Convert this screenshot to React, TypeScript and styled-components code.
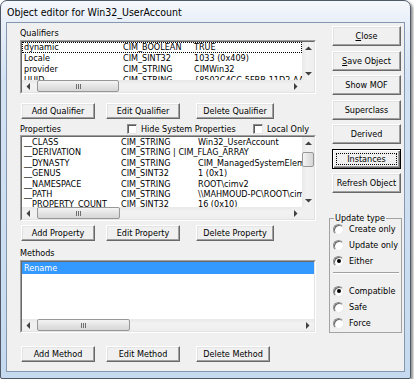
import React from "react";
import styled, { createGlobalStyle, css } from "styled-components";

const FONT = `"DejaVu Sans Condensed", "Liberation Sans", Arial, sans-serif`;
const FS = "9px";

const Global = createGlobalStyle`
  html, body { margin: 0; padding: 0; background: #ffffff; }
  body { font-family: ${FONT}; color: #000; }
  * { box-sizing: border-box; }
`;

const Window = styled.div`
  width: 411px;
  height: 379px;
  border: 1px solid #4f5968;
  border-radius: 7px 7px 2px 2px;
  background: linear-gradient(to bottom, #f5f8fc 0px, #e8eff8 21px, #d3e2f3 80px, #c6daef 100%);
  box-shadow: 2px 2px 3px rgba(0, 0, 0, 0.45);
  display: flex;
  flex-direction: column;
`;

const TitleBar = styled.div`
  height: 21px;
  padding-left: 6px;
  font-size: 10.5px;
  line-height: 22px;
  white-space: nowrap;
`;

const Client = styled.div`
  margin: 0 5px;
  height: 350px;
  border: 1px solid #8397b0;
  background: #f0f0f0;
  display: flex;
  font-size: ${FS};
`;

const LeftCol = styled.div`
  margin-left: 13px;
  width: 296px;
  display: flex;
  flex-direction: column;
`;

const RightCol = styled.div`
  margin-left: 13px;
  width: 74px;
  display: flex;
  flex-direction: column;
`;

const Label = styled.div<{ $mt: number }>`
  margin-top: ${(p) => p.$mt}px;
  height: 13px;
  line-height: 13px;
  white-space: nowrap;
`;

const ListFrame = styled.div<{ $h: number }>`
  height: ${(p) => p.$h}px;
  border: 1px solid;
  border-color: #a0a0a0 #ffffff #ffffff #a0a0a0;
`;

const ListInner = styled.div<{ $v: boolean }>`
  height: 100%;
  border: 1px solid;
  border-color: #696969 #e3e3e3 #e3e3e3 #696969;
  display: grid;
  grid-template-columns: ${(p) => (p.$v ? "1fr 12px" : "1fr")};
  grid-template-rows: 1fr 12px;
  background: #fff;
`;

const ListContent = styled.div`
  overflow: hidden;
  background: #fff;
  min-width: 0;
`;

const Row = styled.div<{ $h: number; $sel?: boolean; $focus?: boolean }>`
  display: flex;
  height: ${(p) => p.$h}px;
  line-height: ${(p) => p.$h}px;
  white-space: nowrap;
  padding-left: 2px;
  ${(p) =>
    p.$sel &&
    css`
      background: #3399ff;
      color: #fff;
    `}
  ${(p) =>
    p.$focus &&
    css`
      outline: 1px dotted #000;
      outline-offset: -1px;
    `}
`;

const Cell = styled.span<{ $w?: number }>`
  flex: 0 0 ${(p) => (p.$w ? `${p.$w}px` : "auto")};
  overflow: visible;
`;

const HBar = styled.div`
  display: flex;
  height: 12px;
  background: linear-gradient(to bottom, #e9e9e9, #f2f2f2 40%, #eeeeee);
`;

const VBar = styled.div`
  display: flex;
  flex-direction: column;
  width: 12px;
  background: linear-gradient(to right, #e9e9e9, #f2f2f2 40%, #eeeeee);
`;

const Corner = styled.div`
  background: #f0f0f0;
`;

const ArrowBox = styled.div`
  flex: 0 0 12px;
  width: 12px;
  height: 12px;
  display: flex;
  align-items: center;
  justify-content: center;
`;

const Track = styled.div<{ $vertical?: boolean }>`
  flex: 1;
  display: flex;
  flex-direction: ${(p) => (p.$vertical ? "column" : "row")};
`;

const Thumb = styled.div<{ $vertical?: boolean }>`
  border: 1px solid #979797;
  border-radius: 2px;
  background: ${(p) =>
    p.$vertical
      ? "linear-gradient(to right, #f4f4f4, #e4e4e4 50%, #d6d6d6)"
      : "linear-gradient(to bottom, #f4f4f4, #e4e4e4 50%, #d6d6d6)"};
  display: flex;
  align-items: center;
  justify-content: center;
`;

const Grip = styled.span`
  width: 5px;
  height: 5px;
  background: linear-gradient(
    to right,
    #6e6e6e 0 1px,
    transparent 1px 2px,
    #6e6e6e 2px 3px,
    transparent 3px 4px,
    #6e6e6e 4px 5px
  );
`;

type Dir = "up" | "down" | "left" | "right";
const arrowPts: Record<Dir, string> = {
  up: "0,4 3.5,0.5 7,4",
  down: "0,0 3.5,3.5 7,0",
  left: "4,0 0.5,3.5 4,7",
  right: "0,0 3.5,3.5 0,7",
};

const Arrow = ({ dir }: { dir: Dir }) => {
  const v = dir === "up" || dir === "down";
  return (
    <ArrowBox>
      <svg width={v ? 7 : 4} height={v ? 4 : 7} viewBox={v ? "0 0 7 4" : "0 0 4 7"}>
        <polygon points={arrowPts[dir]} fill="#404040" />
      </svg>
    </ArrowBox>
  );
};

const HScroll = ({ left, width }: { left: number; width: number }) => (
  <HBar>
    <Arrow dir="left" />
    <Track>
      <Thumb style={{ marginLeft: left, width }}>
        <Grip />
      </Thumb>
    </Track>
    <Arrow dir="right" />
  </HBar>
);

const VScroll = ({ thumb }: { thumb?: { top: number; height: number } }) => (
  <VBar>
    <Arrow dir="up" />
    <Track $vertical>
      {thumb && <Thumb $vertical style={{ marginTop: thumb.top, height: thumb.height }} />}
    </Track>
    <Arrow dir="down" />
  </VBar>
);

const ButtonRow = styled.div<{ $mt: number }>`
  margin-top: ${(p) => p.$mt}px;
  padding-left: 1px;
  display: flex;
  gap: 11px;
  & > :last-child {
    margin-left: 5px;
  }
`;

const PushButton = styled.button<{ $w: number; $h: number; $default?: boolean }>`
  width: ${(p) => p.$w}px;
  height: ${(p) => p.$h}px;
  padding: 0;
  margin: 0;
  font-family: ${FONT};
  font-size: ${FS};
  color: #000;
  background: #f0f0f0;
  border: 1px solid;
  border-color: #ffffff #696969 #696969 #ffffff;
  box-shadow: inset -1px -1px 0 #a0a0a0, inset 1px 1px 0 #e3e3e3;
  display: flex;
  align-items: center;
  justify-content: center;
  white-space: nowrap;
  ${(p) =>
    p.$default &&
    css`
      border-color: #000;
      box-shadow: inset 1px 1px 0 #fff, inset -1px -1px 0 #696969, inset -2px -2px 0 #a0a0a0;
    `}
`;

const FocusRect = styled.span`
  display: flex;
  align-items: center;
  justify-content: center;
  width: calc(100% - 8px);
  height: calc(100% - 8px);
  outline: 1px dotted #000;
`;

const SideButtons = styled.div`
  margin-top: 3px;
  padding-left: 3px;
  display: flex;
  flex-direction: column;
  gap: 4.5px;
`;

const Header = styled.div`
  margin-top: 4px;
  height: 12px;
  display: flex;
  align-items: center;
  white-space: nowrap;
`;

const HeaderLabel = styled.span`
  width: 107px;
`;

const CheckItem = styled.label<{ $w?: number }>`
  display: flex;
  align-items: center;
  gap: 4px;
  ${(p) => p.$w && `width: ${p.$w}px;`}
`;

const CheckBox = styled.span`
  width: 10px;
  height: 10px;
  background: #fff;
  border: 1px solid;
  border-color: #8a8a8a #e8e8e8 #e8e8e8 #8a8a8a;
  box-shadow: inset 1px 1px 0 #5a5a5a;
`;

const GroupBox = styled.fieldset`
  margin: 19px 0 0 0;
  width: 73px;
  height: 121px;
  padding: 0 0 1px 3px;
  border: 1px solid #a3a3a3;
  min-width: 0;
`;

const Legend = styled.legend`
  padding: 0 1px;
  margin-left: 1px;
  line-height: 12px;
  font-size: ${FS};
  white-space: nowrap;
`;

const RadioList = styled.div`
  margin-top: -3px;
  display: flex;
  flex-direction: column;
`;

const RadioRow = styled.div`
  height: 16px;
  display: flex;
  align-items: center;
  gap: 5px;
  white-space: nowrap;
`;

const RadioCircle = styled.span<{ $checked?: boolean }>`
  width: 11px;
  height: 11px;
  border-radius: 50%;
  background: #fff;
  border: 1px solid;
  border-color: #8c8c8c #ececec #ececec #8c8c8c;
  box-shadow: inset 1px 1px 0 #6a6a6a;
  display: flex;
  align-items: center;
  justify-content: center;
  ${(p) =>
    p.$checked &&
    css`
      &::after {
        content: "";
        width: 4px;
        height: 4px;
        border-radius: 50%;
        background: #000;
      }
    `}
`;

const Separator = styled.div`
  margin: 3px 2px 9px 0;
  border-top: 1px solid #a0a0a0;
  border-bottom: 1px solid #ffffff;
`;

const U = styled.span`
  text-decoration: underline;
`;

const qualifiers = [
  ["dynamic", "CIM_BOOLEAN", "TRUE"],
  ["Locale", "CIM_SINT32", "1033 (0x409)"],
  ["provider", "CIM_STRING", "CIMWin32"],
  ["UUID", "CIM_STRING", "{8502C4CC-5FBB-11D2-AAC1-006008C78BC7}"],
];

const properties = [
  ["__CLASS", "CIM_STRING", "Win32_UserAccount"],
  ["__DERIVATION", "CIM_STRING | CIM_FLAG_ARRAY", ""],
  ["__DYNASTY", "CIM_STRING", "CIM_ManagedSystemElement"],
  ["__GENUS", "CIM_SINT32", "1 (0x1)"],
  ["__NAMESPACE", "CIM_STRING", "ROOT\\cimv2"],
  ["__PATH", "CIM_STRING", "\\\\MAHMOUD-PC\\ROOT\\cimv2:Win32_UserAccount"],
  ["__PROPERTY_COUNT", "CIM_SINT32", "16 (0x10)"],
];

export default function App() {
  return (
    <>
      <Global />
      <Window>
        <TitleBar>Object editor for Win32_UserAccount</TitleBar>
        <Client>
          <LeftCol>
            <Label $mt={4}>Qualifiers</Label>
            <ListFrame $h={54}>
              <ListInner $v>
                <ListContent>
                  {qualifiers.map((q, i) => (
                    <Row key={q[0]} $h={11} $focus={i === 0}>
                      <Cell $w={99}>{q[0]}</Cell>
                      <Cell $w={71}>{q[1]}</Cell>
                      <Cell>{q[2]}</Cell>
                    </Row>
                  ))}
                </ListContent>
                <VScroll />
                <HScroll left={3} width={82} />
                <Corner />
              </ListInner>
            </ListFrame>
            <ButtonRow $mt={9}>
              <PushButton $w={74} $h={16}>Add Qualifier</PushButton>
              <PushButton $w={74} $h={16}>Edit Qualifier</PushButton>
              <PushButton $w={78} $h={16}>Delete Qualifier</PushButton>
            </ButtonRow>

            <Header>
              <HeaderLabel>Properties</HeaderLabel>
              <CheckItem $w={126}>
                <CheckBox />
                Hide System Properties
              </CheckItem>
              <CheckItem>
                <CheckBox />
                Local Only
              </CheckItem>
            </Header>
            <ListFrame $h={86}>
              <ListInner $v>
                <ListContent>
                  {properties.map((p) => (
                    <Row key={p[0]} $h={10.4}>
                      <Cell $w={97}>{p[0]}</Cell>
                      <Cell $w={77}>{p[1]}</Cell>
                      <Cell>{p[2]}</Cell>
                    </Row>
                  ))}
                </ListContent>
                <VScroll thumb={{ top: 3, height: 15 }} />
                <HScroll left={3} width={83} />
                <Corner />
              </ListInner>
            </ListFrame>
            <ButtonRow $mt={4}>
              <PushButton $w={74} $h={16}>Add Property</PushButton>
              <PushButton $w={74} $h={16}>Edit Property</PushButton>
              <PushButton $w={78} $h={16}>Delete Property</PushButton>
            </ButtonRow>

            <Label $mt={6}>Methods</Label>
            <ListFrame $h={73}>
              <ListInner $v={false}>
                <ListContent>
                  <Row $h={12} $sel>
                    <Cell>Rename</Cell>
                  </Row>
                </ListContent>
                <HScroll left={3} width={93} />
              </ListInner>
            </ListFrame>
            <ButtonRow $mt={13}>
              <PushButton $w={74} $h={16}>Add Method</PushButton>
              <PushButton $w={74} $h={16}>Edit Method</PushButton>
              <PushButton $w={74} $h={16}>Delete Method</PushButton>
            </ButtonRow>
          </LeftCol>

          <RightCol>
            <SideButtons>
              <PushButton $w={69} $h={20}>
                <span><U>C</U>lose</span>
              </PushButton>
              <PushButton $w={69} $h={20}>
                <span><U>S</U>ave Object</span>
              </PushButton>
              <PushButton $w={69} $h={20}>Show MOF</PushButton>
              <PushButton $w={69} $h={20}>Superclass</PushButton>
              <PushButton $w={69} $h={20}>Derived</PushButton>
              <PushButton $w={69} $h={20} $default>
                <FocusRect>Instances</FocusRect>
              </PushButton>
              <PushButton $w={69} $h={20}>Refresh Object</PushButton>
            </SideButtons>
            <GroupBox>
              <Legend>Update type</Legend>
              <RadioList>
                <RadioRow>
                  <RadioCircle />
                  Create only
                </RadioRow>
                <RadioRow>
                  <RadioCircle />
                  Update only
                </RadioRow>
                <RadioRow>
                  <RadioCircle $checked />
                  Either
                </RadioRow>
                <Separator />
                <RadioRow>
                  <RadioCircle $checked />
                  Compatible
                </RadioRow>
                <RadioRow>
                  <RadioCircle />
                  Safe
                </RadioRow>
                <RadioRow>
                  <RadioCircle />
                  Force
                </RadioRow>
              </RadioList>
            </GroupBox>
          </RightCol>
        </Client>
      </Window>
    </>
  );
}
